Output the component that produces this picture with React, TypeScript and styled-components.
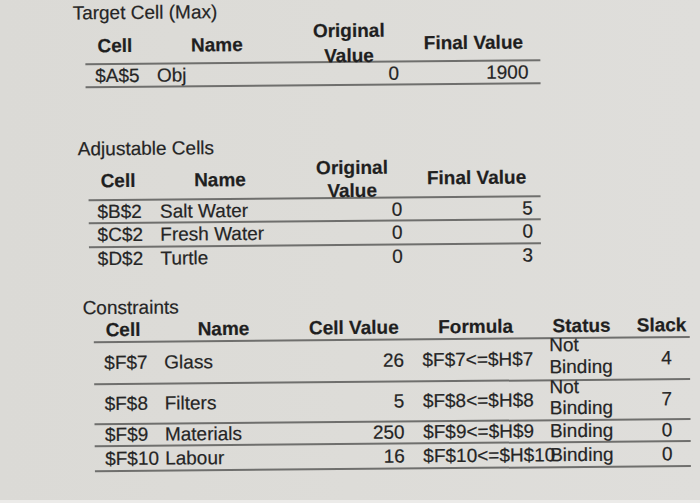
import React from "react";
import styled, { createGlobalStyle } from "styled-components";

const Global = createGlobalStyle`
  html, body { margin: 0; padding: 0; }
  body { width: 700px; height: 503px; overflow: hidden; background: #dddcd8; }
`;

const Page = styled.main`
  box-sizing: border-box;
  width: 700px;
  height: 503px;
  overflow: hidden;
  background: linear-gradient(90deg, #dbdad6 0%, #dddcd8 50%, #dfdedb 100%);
  border-bottom: 3px solid #ecebe9;
  font-family: "Liberation Sans", Arial, Helvetica, sans-serif;
  font-size: 19px;
  color: #252525;
  -webkit-text-stroke: 0.2px #252525;
`;

const Sheet = styled.div`
  display: flex;
  flex-direction: column;
  padding-top: 0.7px;
  transform: rotate(-0.5deg);
  transform-origin: 350px 250px;
`;

const Section = styled.section<{ $gap: number }>`
  display: flex;
  flex-direction: column;
  margin-top: ${(p) => p.$gap}px;
`;

const Title = styled.h2<{ $indent: number }>`
  margin: 0;
  padding-left: ${(p) => p.$indent}px;
  font-size: 19px;
  font-weight: 400;
  line-height: 20px;
`;

const Table = styled.div<{ $indent: number; $width: number }>`
  display: flex;
  flex-direction: column;
  margin-left: ${(p) => p.$indent}px;
  width: ${(p) => p.$width}px;
`;

const Row = styled.div<{ $cols: string; $height: number; $line?: boolean }>`
  display: grid;
  grid-template-columns: ${(p) => p.$cols};
  grid-template-rows: ${(p) => p.$height}px;
  align-items: center;
  white-space: nowrap;
  border-bottom: ${(p) => (p.$line ? "2px solid #6f6f6d" : "0 none")};
`;

const Cell = styled.div<{ $align?: "left" | "right" | "center"; $pl?: number; $pr?: number }>`
  text-align: ${(p) => p.$align ?? "left"};
  padding-left: ${(p) => p.$pl ?? 0}px;
  padding-right: ${(p) => p.$pr ?? 0}px;
  line-height: normal;
`;

const Head = styled(Cell)<{ $top?: number; $end?: boolean }>`
  font-weight: 700;
  color: #1f1f1f;
  align-self: ${(p) => (p.$end ? "end" : "start")};
  padding-top: ${(p) => p.$top ?? 0}px;
`;

const Wrapped = styled(Cell)<{ $lh: number; $shift: number; $bold?: boolean }>`
  align-self: start;
  line-height: ${(p) => p.$lh}px;
  margin-top: ${(p) => p.$shift}px;
  font-weight: ${(p) => (p.$bold ? 700 : 400)};
  color: ${(p) => (p.$bold ? "#1f1f1f" : "inherit")};
`;

const COLS_A = "68px 142px 108px 137px";
const COLS_C = "60px 140px 114.5px 138px 80px 64px";

type AdjRow = { cell: string; name: string; orig: string; fin: string };

const adjustable: AdjRow[] = [
  { cell: "$B$2", name: "Salt Water", orig: "0", fin: "5" },
  { cell: "$C$2", name: "Fresh Water", orig: "0", fin: "0" },
  { cell: "$D$2", name: "Turtle", orig: "0", fin: "3" },
];

type ConRow = {
  cell: string;
  name: string;
  value: string;
  formula: string;
  status: string[];
  slack: string;
  height: number;
};

const constraints: ConRow[] = [
  { cell: "$F$7", name: "Glass", value: "26", formula: "$F$7<=$H$7", status: ["Not", "Binding"], slack: "4", height: 39.8 },
  { cell: "$F$8", name: "Filters", value: "5", formula: "$F$8<=$H$8", status: ["Not", "Binding"], slack: "7", height: 38.8 },
  { cell: "$F$9", name: "Materials", value: "250", formula: "$F$9<=$H$9", status: ["Binding"], slack: "0", height: 20 },
  { cell: "$F$10", name: "Labour", value: "16", formula: "$F$10<=$H$10", status: ["Binding"], slack: "0", height: 22.3 },
];

function ValueHeader({ top, lh, shift, rowH }: { top: number; lh: number; shift: number; rowH: number }) {
  return (
    <Row $cols={COLS_A} $height={rowH} $line>
      <Head $pl={12.5} $top={top}>Cell</Head>
      <Head $pl={38} $top={top}>Name</Head>
      <Wrapped $align="center" $lh={lh} $shift={shift} $bold>
        Original
        <br />
        Value
      </Wrapped>
      <Head $align="center" $pl={4} $top={top}>Final Value</Head>
    </Row>
  );
}

export default function App() {
  return (
    <Page>
      <Global />
      <Sheet>
        <Section $gap={0}>
          <Title $indent={74.7}>Target Cell (Max)</Title>
          <Table $indent={86.7} $width={455}>
            <ValueHeader top={12.1} lh={25.4} shift={-3} rowH={40.7} />
            <Row $cols={COLS_A} $height={20.5} $line>
              <Cell $pl={10}>$A$5</Cell>
              <Cell $pl={3.7}>Obj</Cell>
              <Cell $align="right" $pr={4}>0</Cell>
              <Cell $align="right" $pr={11.7}>1900</Cell>
            </Row>
          </Table>
        </Section>

        <Section $gap={50.8}>
          <Title $indent={78.7}>Adjustable Cells</Title>
          <Table $indent={88.7} $width={452}>
            <ValueHeader top={11.3} lh={22.7} shift={0.3} rowH={40.1} />
            {adjustable.map((r, i) => (
              <Row key={r.cell} $cols={COLS_A} $height={21.5} $line={i < adjustable.length - 1}>
                <Cell $pl={9}>{r.cell}</Cell>
                <Cell $pl={3.7}>{r.name}</Cell>
                <Cell $align="right" $pr={4}>{r.orig}</Cell>
                <Cell $align="right" $pr={10.6}>{r.fin}</Cell>
              </Row>
            ))}
          </Table>
        </Section>

        <Section $gap={28.5}>
          <Title $indent={82.1}>Constraints</Title>
          <Table $indent={92.5} $width={596.5}>
            <Row $cols={COLS_C} $height={23.1} $line>
              <Head $pl={12.4} $end>Cell</Head>
              <Head $pl={44.4} $end>Name</Head>
              <Head $align="right" $pr={9} $end>Cell Value</Head>
              <Head $pl={30.5} $end>Formula</Head>
              <Head $pl={6.9} $end>Status</Head>
              <Head $pl={11} $end>Slack</Head>
            </Row>
            {constraints.map((r) => (
              <Row key={r.cell} $cols={COLS_C} $height={r.height} $line>
                <Cell $pl={10.8}>{r.cell}</Cell>
                <Cell $pl={10.8}>{r.name}</Cell>
                <Cell $align="right" $pr={4}>{r.value}</Cell>
                <Cell $pl={14.5}>{r.formula}</Cell>
                {r.status.length > 1 ? (
                  <Wrapped $pl={3.3} $lh={21.6} $shift={-4.8}>
                    {r.status[0]}
                    <br />
                    {r.status[1]}
                  </Wrapped>
                ) : (
                  <Cell $pl={3.3}>{r.status[0]}</Cell>
                )}
                <Cell $align="right" $pr={18.3}>{r.slack}</Cell>
              </Row>
            ))}
          </Table>
        </Section>
      </Sheet>
    </Page>
  );
}
